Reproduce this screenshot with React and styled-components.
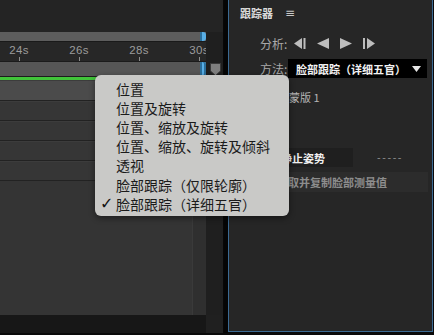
import React from 'react';
import styled, { createGlobalStyle } from 'styled-components';

const GlobalStyle = createGlobalStyle`
  html, body { margin: 0; padding: 0; background: #0a0a0a; }
  body { font-family: "Noto Sans CJK SC", "Noto Sans", sans-serif; }
`;

const Screen = styled.div`
  position: relative;
  display: flex;
  width: 434px;
  height: 333px;
  background: #0a0a0a;
  overflow: hidden;
`;

const TimelinePane = styled.div`
  display: flex;
  width: 224px;
  height: 333px;
`;

const Track = styled.div`
  display: flex;
  flex-direction: column;
  width: 206px;
  overflow: hidden;
  background: #242424;
`;

const TopSpace = styled.div`
  height: 32px;
  background: #242424;
`;

const RangeBar = styled.div`
  display: flex;
  justify-content: flex-end;
  height: ${({ h }) => h}px;
  background: ${({ bg }) => bg};
`;

const InHandle = styled.div`
  width: 6px;
  height: 100%;
  background: #58aee6;
  border-radius: 0 3px 3px 0;
  box-shadow: inset 2px 0 0 #2b6f9c;
`;

const OutHandle = styled.div`
  width: 6px;
  height: 100%;
  background: #58aee6;
  border-radius: 0 2px 2px 0;
  box-shadow: inset 2px 0 0 #2b6f9c, inset -2px 0 0 #2b6f9c;
`;

const Ruler = styled.div`
  position: relative;
  height: 20px;
  background: #272727;
  border-top: 1px solid #1a1a1a;
  box-sizing: border-box;
`;

const TickLabel = styled.span`
  position: absolute;
  top: 2px;
  width: 30px;
  margin-left: -15px;
  text-align: center;
  font-family: "Liberation Sans", Arial, sans-serif;
  font-size: 11.5px;
  letter-spacing: 0.4px;
  color: #9c9c9c;
`;

const Tick = styled.span`
  position: absolute;
  top: 15px;
  width: 1px;
  height: 4px;
  background: #8c8c8c;
`;

const Line = styled.div`
  height: ${({ h }) => h || 1}px;
  background: ${({ bg }) => bg};
`;

const LayerRow = styled.div`
  height: ${({ h }) => h}px;
  box-sizing: border-box;
  background: ${({ bg }) => bg};
  border-bottom: 1px solid #222222;
  box-shadow: inset 0 1px 0 #3c3c3c;
`;

const Filler = styled.div`
  flex: 1;
  display: flex;
  background: #343434;
`;

const FillerMain = styled.div`
  flex: 1;
`;

const FillerStrip = styled.div`
  width: 13px;
  background: #2f2f2f;
  border-left: 1px solid #3a3a3a;
`;

const BottomBar = styled.div`
  height: 18px;
  background: ${({ bg }) => bg};
`;

const ScrollColumn = styled.div`
  display: flex;
  flex-direction: column;
  width: 18px;
  background: #1f1f1f;
  border-right: 1px solid #070707;
  box-sizing: border-box;
`;

const ScrollTop = styled.div`
  height: 32px;
  background: #242424;
`;

const ScrollBody = styled.div`
  flex: 1;
`;

const TimeHead = styled.svg`
  position: absolute;
  left: 210px;
  top: 63px;
`;

const PanelGap = styled.div`
  width: 4px;
  background: #050505;
`;

const Panel = styled.div`
  display: flex;
  flex-direction: column;
  width: 205px;
  height: 332px;
  box-sizing: border-box;
  background: #262626;
  border: 1px solid #3b6a93;
  border-top: none;
`;

const PanelHeader = styled.div`
  display: flex;
  align-items: center;
  gap: 12px;
  height: 26px;
  padding-left: 11px;
  font-size: 11px;
  font-weight: 700;
  color: #dadada;
`;

const MenuGlyph = styled.span`
  font-size: 12px;
  font-weight: 400;
  color: #c8c8c8;
  font-family: "DejaVu Sans", sans-serif;
`;

const FieldRow = styled.div`
  display: flex;
  align-items: center;
  height: ${({ h }) => h}px;
  margin-top: ${({ mt }) => mt}px;
  padding-left: 31px;
  font-size: 12px;
  color: #a9a9a9;
`;

const FieldLabel = styled.span`
  width: 28px;
`;

const Transport = styled.div`
  display: flex;
  align-items: center;
  gap: 11px;
  margin-left: 6px;
`;

const Select = styled.div`
  display: flex;
  align-items: center;
  justify-content: space-between;
  width: 139px;
  height: 19px;
  box-sizing: border-box;
  padding: 0 6px 0 8px;
  background: #000;
  color: #f2f2f2;
  font-weight: 700;
  font-size: 11px;
`;

const IndentRow = styled.div`
  display: flex;
  align-items: center;
  height: ${({ h }) => h}px;
  margin-top: ${({ mt }) => mt}px;
  padding-left: ${({ pl }) => pl}px;
  font-size: 11px;
  color: ${({ color }) => color || '#b5b5b5'};
`;

const ActionButton = styled.div`
  display: flex;
  align-items: center;
  width: 83px;
  height: 19px;
  padding-left: 11px;
  box-sizing: border-box;
  background: #1f1f1f;
  color: #f0f0f0;
  font-weight: 700;
  font-size: 11px;
`;

const Dashes = styled.span`
  margin-left: 24px;
  font-family: "DejaVu Sans", sans-serif;
  font-size: 10px;
  letter-spacing: 1.6px;
  color: #8a8a8a;
`;

const WideButton = styled.div`
  display: flex;
  align-items: center;
  width: 158px;
  height: 20px;
  padding-left: 7px;
  box-sizing: border-box;
  background: #2c2c2c;
  color: #8d8d8d;
  font-size: 11px;
  font-weight: 700;
`;

const Menu = styled.div`
  position: absolute;
  left: 95px;
  top: 75px;
  width: 194px;
  height: 141px;
  box-sizing: border-box;
  padding-top: 4px;
  background: #c9c9c7;
  border-radius: 6px;
  box-shadow: 0 2px 6px rgba(0, 0, 0, 0.45);
`;

const MenuItem = styled.div`
  display: flex;
  align-items: center;
  height: 19.2px;
  font-size: 14px;
  color: #1b1b1b;
`;

const CheckCell = styled.span`
  width: 16px;
  padding-left: 5px;
  font-size: 16px;
  font-weight: 700;
  line-height: 1;
  font-family: "DejaVu Sans", sans-serif;
  color: #111;
`;

const ticks = [
  { label: '24s', x: 19 },
  { label: '26s', x: 79 },
  { label: '28s', x: 139 },
  { label: '30s', x: 199 },
];

const menuItems = [
  '位置',
  '位置及旋转',
  '位置、缩放及旋转',
  '位置、缩放、旋转及倾斜',
  '透视',
  '脸部跟踪（仅限轮廓）',
  '脸部跟踪（详细五官）',
];

const StepBack = () => (
  <svg width="12" height="11" viewBox="0 0 12 11">
    <polygon points="8,0 8,11 0,5.5" fill="#bdbdbd" />
    <rect x="9.5" y="0" width="2" height="11" fill="#bdbdbd" />
  </svg>
);

const PlayBack = () => (
  <svg width="12" height="11" viewBox="0 0 12 11">
    <polygon points="12,0 12,11 0,5.5" fill="#bdbdbd" />
  </svg>
);

const PlayForward = () => (
  <svg width="12" height="11" viewBox="0 0 12 11">
    <polygon points="0,0 0,11 12,5.5" fill="#bdbdbd" />
  </svg>
);

const StepForward = () => (
  <svg width="12" height="11" viewBox="0 0 12 11">
    <rect x="0" y="0" width="2" height="11" fill="#bdbdbd" />
    <polygon points="4,0 4,11 12,5.5" fill="#bdbdbd" />
  </svg>
);

const Caret = () => (
  <svg width="9" height="6" viewBox="0 0 9 6">
    <polygon points="0,0 9,0 4.5,6" fill="#e8e8e8" />
  </svg>
);

export default function App() {
  return (
    <>
      <GlobalStyle />
      <Screen>
        <TimelinePane>
          <Track>
            <TopSpace />
            <RangeBar h={9} bg="#5d5d5d">
              <InHandle />
            </RangeBar>
            <Ruler>
              {ticks.map((t) => (
                <React.Fragment key={t.label}>
                  <TickLabel style={{ left: t.x }}>{t.label}</TickLabel>
                  <Tick style={{ left: t.x }} />
                </React.Fragment>
              ))}
            </Ruler>
            <Line bg="#1b1b1b" />
            <RangeBar h={14} bg="#565656">
              <OutHandle />
            </RangeBar>
            <Line bg="#1c1c1c" />
            <Line h={3} bg="#41c43a" />
            <LayerRow h={21} bg="#4b4b4b" />
            <LayerRow h={20} bg="#363636" />
            <LayerRow h={20} bg="#363636" />
            <LayerRow h={20} bg="#363636" />
            <LayerRow h={20} bg="#363636" />
            <Filler>
              <FillerMain />
              <FillerStrip />
            </Filler>
            <BottomBar bg="#171717" />
          </Track>
          <ScrollColumn>
            <ScrollTop />
            <ScrollBody />
            <BottomBar bg="#202020" />
          </ScrollColumn>
        </TimelinePane>
        <PanelGap />
        <Panel>
          <PanelHeader>
            跟踪器
            <MenuGlyph>≡</MenuGlyph>
          </PanelHeader>
          <FieldRow h={20} mt={7}>
            <FieldLabel>分析:</FieldLabel>
            <Transport>
              <StepBack />
              <PlayBack />
              <PlayForward />
              <StepForward />
            </Transport>
          </FieldRow>
          <FieldRow h={19} mt={6}>
            <FieldLabel>方法:</FieldLabel>
            <Select>
              脸部跟踪（详细五官）
              <Caret />
            </Select>
          </FieldRow>
          <IndentRow h={18} mt={10} pl={60}>
            蒙版 1
          </IndentRow>
          <IndentRow h={19} mt={42} pl={41}>
            <ActionButton>静止姿势</ActionButton>
            <Dashes>-----</Dashes>
          </IndentRow>
          <IndentRow h={20} mt={5} pl={41}>
            <WideButton>提取并复制脸部测量值</WideButton>
          </IndentRow>
        </Panel>
        <TimeHead width="11" height="13" viewBox="0 0 11 13">
          <polygon points="0.5,0.5 10.5,0.5 10.5,8 5.5,12.5 0.5,8" fill="#7f7f7f" stroke="#3a3a3a" />
        </TimeHead>
        <Menu>
          {menuItems.map((item, i) => (
            <MenuItem key={item}>
              <CheckCell>{i === menuItems.length - 1 ? '✓' : ''}</CheckCell>
              {item}
            </MenuItem>
          ))}
        </Menu>
      </Screen>
    </>
  );
}
